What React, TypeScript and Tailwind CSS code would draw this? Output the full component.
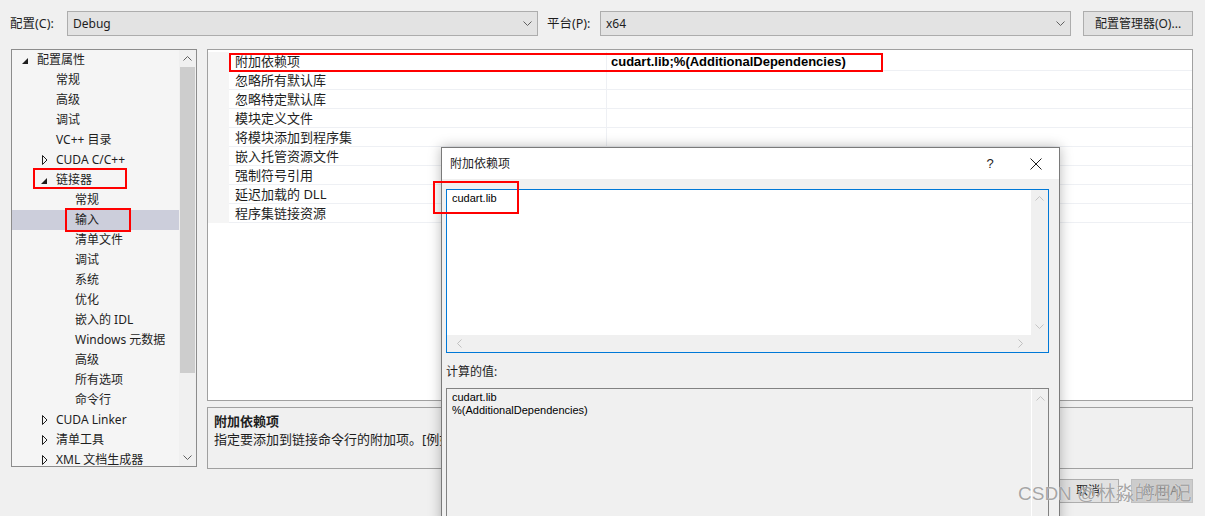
import React from "react";

const FONT = "font-['Noto_Sans','Noto_Sans_CJK_SC',sans-serif]";

function ChevDown({ color = "#606060" }: { color?: string }) {
  return (
    <svg width="9" height="5" viewBox="0 0 9 5" className="block">
      <polyline points="0.5,0.5 4.5,4.5 8.5,0.5" fill="none" stroke={color} strokeWidth="1" />
    </svg>
  );
}
function ChevUp({ color = "#606060" }: { color?: string }) {
  return (
    <svg width="9" height="5" viewBox="0 0 9 5" className="block">
      <polyline points="0.5,4.5 4.5,0.5 8.5,4.5" fill="none" stroke={color} strokeWidth="1" />
    </svg>
  );
}
function ChevLeft({ color = "#c0c0c0" }: { color?: string }) {
  return (
    <svg width="5" height="9" viewBox="0 0 5 9" className="block">
      <polyline points="4.5,0.5 0.5,4.5 4.5,8.5" fill="none" stroke={color} strokeWidth="1" />
    </svg>
  );
}
function ChevRight({ color = "#c0c0c0" }: { color?: string }) {
  return (
    <svg width="5" height="9" viewBox="0 0 5 9" className="block">
      <polyline points="0.5,0.5 4.5,4.5 0.5,8.5" fill="none" stroke={color} strokeWidth="1" />
    </svg>
  );
}

function Combo({ value }: { value: string }) {
  return (
    <div className="flex h-[25px] w-[471px] items-center justify-between border border-[#adadad] bg-[#e3e3e3] pl-[5px] pr-[5px]">
      <span className="text-[12px] leading-[16px]">{value}</span>
      <ChevDown />
    </div>
  );
}

type TreeItem = { t: string; l: 0 | 1 | 2; a?: "exp" | "col"; sel?: boolean };
const treeItems: TreeItem[] = [
  { t: "配置属性", l: 0, a: "exp" },
  { t: "常规", l: 1 },
  { t: "高级", l: 1 },
  { t: "调试", l: 1 },
  { t: "VC++ 目录", l: 1 },
  { t: "CUDA C/C++", l: 1, a: "col" },
  { t: "链接器", l: 1, a: "exp" },
  { t: "常规", l: 2 },
  { t: "输入", l: 2, sel: true },
  { t: "清单文件", l: 2 },
  { t: "调试", l: 2 },
  { t: "系统", l: 2 },
  { t: "优化", l: 2 },
  { t: "嵌入的 IDL", l: 2 },
  { t: "Windows 元数据", l: 2 },
  { t: "高级", l: 2 },
  { t: "所有选项", l: 2 },
  { t: "命令行", l: 2 },
  { t: "CUDA Linker", l: 1, a: "col" },
  { t: "清单工具", l: 1, a: "col" },
  { t: "XML 文档生成器", l: 1, a: "col" },
];

function Arrow({ a }: { a?: "exp" | "col" }) {
  if (a === "exp")
    return (
      <svg width="6" height="6" viewBox="0 0 6 6" className="block mt-[1px]">
        <polygon points="6,0 6,6 0,6" fill="#1e1e1e" />
      </svg>
    );
  if (a === "col")
    return (
      <svg width="6" height="10" viewBox="0 0 6 10" className="block ml-[1px]">
        <polygon points="0.5,0.5 5,5 0.5,9.5" fill="none" stroke="#1e1e1e" strokeWidth="1" />
      </svg>
    );
  return null;
}

function Tree() {
  return (
    <div className="flex h-[418px] w-[186px] overflow-hidden border border-[#8c8c8c] bg-[#f5f5f5]">
      <div className="w-[167px] overflow-hidden">
        {treeItems.map((it, i) => (
          <div
            key={i}
            className={
              "flex h-[20px] items-center " +
              (it.l === 0 ? "pl-[10px] " : it.l === 1 ? "pl-[29px] " : "pl-[48px] ") +
              (it.sel ? "bg-[#cccedb]" : "")
            }
          >
            <div className="flex w-[15px] items-center">
              <Arrow a={it.a} />
            </div>
            <span className="whitespace-nowrap text-[12px] leading-[16px] text-[#1e1e1e]">{it.t}</span>
          </div>
        ))}
      </div>
      <div className="flex w-[17px] flex-col bg-[#f0f0f0]">
        <div className="flex h-[17px] items-center justify-center">
          <ChevUp />
        </div>
        <div className="mx-[1px] h-[306px] bg-[#cdcdcd]" />
        <div className="flex-1" />
        <div className="flex h-[17px] items-center justify-center">
          <ChevDown />
        </div>
      </div>
    </div>
  );
}

const gridRows = [
  "附加依赖项",
  "忽略所有默认库",
  "忽略特定默认库",
  "模块定义文件",
  "将模块添加到程序集",
  "嵌入托管资源文件",
  "强制符号引用",
  "延迟加载的 DLL",
  "程序集链接资源",
];

function Grid() {
  return (
    <div className="h-[352px] w-[986px] border border-[#a0a0a0] bg-white pt-[2px]">
      {gridRows.map((r, i) => (
        <div key={i} className="flex h-[19px]">
          <div className="w-[21px] bg-[#f5f5f5]" />
          <div className="flex w-[378px] items-center border-b border-r border-[#eef0f4] pl-[6px] pt-[1px]">
            <span className="whitespace-nowrap text-[13px] leading-[17px] text-[#1e1e1e]">{r}</span>
          </div>
          <div className="flex flex-1 items-center border-b border-[#eef0f4] pl-[4px] pt-[1px]">
            {i === 0 && (
              <span className="whitespace-nowrap font-['Liberation_Sans',sans-serif] text-[13px] font-bold leading-[16px] text-black">
                cudart.lib;%(AdditionalDependencies)
              </span>
            )}
          </div>
        </div>
      ))}
    </div>
  );
}

function Desc() {
  return (
    <div className="mt-[6px] h-[62px] w-[986px] border border-[#a0a0a0] bg-[#f0f0f0] pl-[6px] pt-[5px]">
      <div className="text-[13px] font-bold leading-[17px] text-[#1e1e1e]">附加依赖项</div>
      <div className="whitespace-nowrap text-[13px] leading-[18px] text-[#1e1e1e]">
        指定要添加到链接命令行的附加项。[例如 kernel32.lib]
      </div>
    </div>
  );
}

function Buttons() {
  return (
    <div className="mt-[10px] flex w-[986px] justify-end gap-[12px]">
      <div className="flex h-[24px] w-[62px] items-center justify-center border border-[#adadad] bg-[#e1e1e1] text-[12px]">
        确定
      </div>
      <div className="flex h-[24px] w-[62px] items-center justify-center border border-[#adadad] bg-[#e1e1e1] text-[12px]">
        取消
      </div>
      <div className="flex h-[24px] w-[62px] items-center justify-center border border-[#bfbfbf] bg-[#cccccc] text-[12px] text-[#838383]">
        应用(A)
      </div>
    </div>
  );
}

function Dialog() {
  return (
    <div className="absolute left-[441px] top-[147px] h-[380px] w-[619px] border border-[#7a7a7a] bg-[#f0f0f0] shadow-[0_0_12px_rgba(0,0,0,0.28)]">
      <div className="flex h-[31px] items-center bg-white">
        <span className="flex-1 pl-[8px] text-[12px] leading-[16px] text-[#1e1e1e]">附加依赖项</span>
        <div className="flex h-[31px] w-[46px] items-center justify-center font-['Liberation_Sans',sans-serif] text-[13px] text-[#1e1e1e]">
          ?
        </div>
        <div className="flex h-[31px] w-[46px] items-center justify-center">
          <svg width="12" height="12" viewBox="0 0 12 12" className="block">
            <line x1="0.5" y1="0.5" x2="11.5" y2="11.5" stroke="#1e1e1e" strokeWidth="1" />
            <line x1="11.5" y1="0.5" x2="0.5" y2="11.5" stroke="#1e1e1e" strokeWidth="1" />
          </svg>
        </div>
      </div>
      <div className="px-[4px] pt-[10px]">
        <div className="flex h-[164px] w-[603px] flex-col border border-[#0078d7] bg-[#f0f0f0]">
          <div className="flex h-[145px]">
            <div className="flex-1 bg-white pl-[5px] pt-[1px] font-['Liberation_Sans',sans-serif] text-[11px] leading-[14px] text-black">
              cudart.lib
            </div>
            <div className="flex w-[17px] flex-col items-center justify-between py-[6px]">
              <ChevUp color="#c4c4c4" />
              <ChevDown color="#c4c4c4" />
            </div>
          </div>
          <div className="flex h-[17px] items-center justify-between pl-[10px] pr-[25px]">
            <ChevLeft />
            <ChevRight />
          </div>
        </div>
        <div className="mt-[10px] h-[17px] text-[12px] leading-[17px] text-[#1e1e1e]">计算的值:</div>
        <div className="mt-[8px] flex h-[200px] w-[603px] border border-[#828282] bg-[#f0f0f0]">
          <div className="flex-1 pl-[5px] pt-[2px] font-['Liberation_Sans',sans-serif] text-[11px] leading-[13px] text-black">
            <div>cudart.lib</div>
            <div>%(AdditionalDependencies)</div>
          </div>
          <div className="flex w-[17px] justify-center border-l border-white pt-[7px]">
            <ChevUp color="#c4c4c4" />
          </div>
        </div>
      </div>
    </div>
  );
}

export default function App() {
  return (
    <div className={"relative h-[516px] w-[1205px] overflow-hidden bg-[#f0f0f0] text-[#1e1e1e] " + FONT}>
      <div className="mt-[11px] flex h-[25px] items-center pl-[10px]">
        <span className="w-[57px] text-[12.5px] leading-[16px]">配置(C):</span>
        <Combo value="Debug" />
        <span className="ml-[9px] w-[53px] text-[12.5px] leading-[16px]">平台(P):</span>
        <Combo value="x64" />
        <div className="ml-[12px] flex h-[25px] w-[110px] items-center justify-center border border-[#adadad] bg-[#e1e1e1] text-[12px]">
          配置管理器(O)...
        </div>
      </div>
      <div className="mt-[13px] flex pl-[11px]">
        <Tree />
        <div className="ml-[10px] flex flex-col">
          <Grid />
          <Desc />
          <Buttons />
        </div>
      </div>

      <Dialog />

      {/* red annotation boxes */}
      <div className="absolute left-[229px] top-[53px] h-[19px] w-[654px] border-2 border-[#f00]" />
      <div className="absolute left-[33px] top-[168px] h-[21px] w-[94px] border-2 border-[#f00]" />
      <div className="absolute left-[65px] top-[208px] h-[24px] w-[66px] border-2 border-[#f00]" />
      <div className="absolute left-[433px] top-[181px] h-[33px] w-[86px] border-2 border-[#f00]" />

      {/* watermark */}
      <div className="absolute left-[1018px] top-[482px] whitespace-nowrap font-['Liberation_Sans','Noto_Sans_CJK_SC',sans-serif] text-[19px] leading-[24px] text-[#8e8e8e]/80 [text-shadow:0_0_1px_#fff]">
        CSDN @林淼的日记
      </div>
    </div>
  );
}
